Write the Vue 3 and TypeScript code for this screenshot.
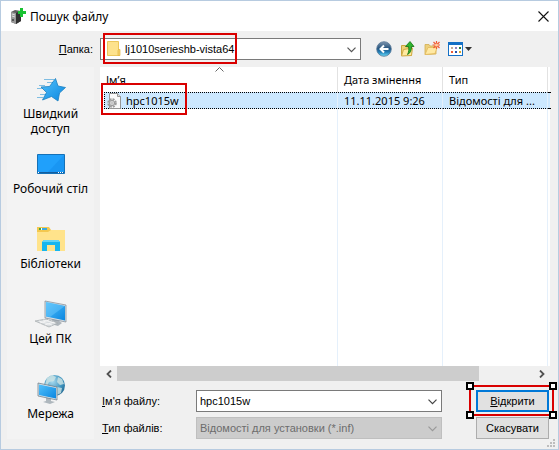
<script setup lang="ts">
import { ref } from 'vue'

interface FileRow {
  name: string
  modified: string
  type: string
}

const places = [
  { id: 'quick', label: 'Швидкий доступ' },
  { id: 'desktop', label: 'Робочий стіл' },
  { id: 'libraries', label: 'Бібліотеки' },
  { id: 'pc', label: 'Цей ПК' },
  { id: 'network', label: 'Мережа' },
]

const files: FileRow[] = [
  { name: 'hpc1015w', modified: '11.11.2015 9:26', type: 'Відомості для ...' },
]

const fileName = ref('hpc1015w')
const folder = ref('lj1010serieshb-vista64')
const fileType = ref('Відомості для установки (*.inf)')
</script>

<template>
  <main class="dialog">
    <header class="titlebar">
      <svg class="app-icon" width="16" height="16" viewBox="0 0 16 16" aria-hidden="true">
        <path d="M1 4l4-2 6 1v10l-5 3-5-2z" fill="#5d5d5d" />
        <path d="M1 4l5 1v11l-5-2z" fill="#999" />
        <path d="M6 5l5-2v10l-5 3z" fill="#303030" />
        <path d="M2 6l3 1M2 8l3 1" stroke="#ddd" />
        <path d="M2 11h2v2H2z" fill="#555" />
        <path d="M10 0h3v3h3v3h-3v3h-3V6H8V3h2z" fill="#19c232" />
      </svg>
      <h1>Пошук файлу</h1>
      <button class="close" type="button" aria-label="Закрити">
        <svg width="11" height="11" viewBox="0 0 11 11"><path d="M.5.5l10 10M10.5.5l-10 10" stroke="#111" stroke-width="1.1" /></svg>
      </button>
    </header>

    <div class="toolbar">
      <label class="folder-label" for="folder"><u>П</u>апка:</label>
      <div class="combo folder">
        <select id="folder" v-model="folder">
          <option>lj1010serieshb-vista64</option>
        </select>
        <svg class="folder-icon" width="14" height="17" viewBox="0 0 14 17" aria-hidden="true">
          <path d="M.5 1.500h11v9h1v5H.5z" fill="#fde28c" stroke="#ecc75b" />
          <path d="M11.500 9.500h1.500v6h-2v-5z" fill="#f6d36e" stroke="#e2b640" stroke-width=".7" />
        </svg>
        <svg class="chevron" width="9" height="6" viewBox="0 0 9 6"><path d="M.5.7l4 4 4-4" fill="none" stroke="#555" stroke-width="1.2" /></svg>
        <span class="mark mark-folder"></span>
      </div>
      <div class="tools">
        <button type="button" aria-label="Назад">
          <svg width="16" height="16" viewBox="0 0 16 16">
            <defs><linearGradient id="back" x1="0" y1="0" x2="0" y2="1"><stop offset="0" stop-color="#8196ae" /><stop offset=".45" stop-color="#27557f" /><stop offset=".7" stop-color="#1f7bb5" /><stop offset="1" stop-color="#6ee0fa" /></linearGradient></defs>
            <circle cx="8" cy="8" r="7.300" fill="url(#back)" stroke="#567695" stroke-width=".8" />
            <path d="M12.500 8H4.500M8 4.500L4.500 8 8 11.500" fill="none" stroke="#fff" stroke-width="2" />
          </svg>
        </button>
        <button type="button" aria-label="На рівень вище">
          <svg width="16" height="16" viewBox="0 0 16 16">
            <path d="M1.500 14.500v-10h4l1 1.500h5v8.500z" fill="#efd076" stroke="#c8a33f" />
            <path d="M1.500 15l2-6.500 9-1.500-1 7.500z" fill="#ffeaa0" stroke="#d1ab47" />
            <path d="M5.500 5.500L10 .500 14 5.500h-2.500c0 4-1 6.500-4 8 1.500-3 1.500-5 1-8z" fill="#2fb52e" stroke="#14700f" stroke-width=".8" />
          </svg>
        </button>
        <button type="button" aria-label="Створити папку">
          <svg width="16" height="16" viewBox="0 0 16 16">
            <path d="M1 13.500v-10h4l1 1.500h6v8z" fill="#ecd07d" stroke="#d3ad4f" stroke-width=".8" />
            <path d="M1 13.500l3-7h9l-2 6z" fill="#ffe9a3" stroke="#e2b95a" stroke-width=".8" />
            <path d="M12.500 0v8M8.500 4h8M9.500 1l6 6M15.500 1l-6 6" stroke="#f05a35" stroke-width="1.200" />
            <circle cx="12.500" cy="4" r="1.500" fill="#ffd0a0" />
          </svg>
        </button>
        <button type="button" class="view" aria-label="Вигляд">
          <svg width="24" height="16" viewBox="0 0 24 16">
            <path d="M0 1h15v14H0z" fill="#1470c6" /><path d="M1 4h13v10H1z" fill="#fff" />
            <path d="M3 6h2v2H3z" fill="#c2ad98" /><path d="M7 6h2v2H7z" fill="#8b83c4" /><path d="M11 6h2v2h-2z" fill="#267b3c" />
            <path d="M3 10h2v2H3z" fill="#ee5a35" /><path d="M7 10h2v2H7z" fill="#2350ab" /><path d="M11 10h2v2h-2z" fill="#d8a426" />
            <path d="M17 6h7l-3.500 4z" fill="#333" />
          </svg>
        </button>
      </div>
    </div>

    <div class="body">
      <nav class="places">
        <button v-for="p in places" :key="p.id" type="button" class="place">
          <svg width="32" height="32" viewBox="0 0 32 32" aria-hidden="true">
            <defs>
              <linearGradient id="blue" x1="0" y1="0" x2="1" y2="1"><stop offset="0" stop-color="#52c1fb" /><stop offset="1" stop-color="#0a86e0" /></linearGradient>
              <radialGradient id="globe" cx=".4" cy=".3" r=".8"><stop offset="0" stop-color="#a9dbef" /><stop offset=".6" stop-color="#3e93be" /><stop offset="1" stop-color="#1d5d86" /></radialGradient>
            </defs>
            <template v-if="p.id === 'quick'">
              <path d="M9 6.500h10M12 9.500h6M4 12.500h6M2 15.500h6M5 21.500h6M2 24.500h6" stroke="#7fbde2" />
              <path d="M20.500 5.500l2.500 7.500 7.500 1.500-6 5.500-1.500 8-6.500-4.500-9 3.500 4-7.500-5.500-5.500 8.500-.5z" fill="url(#blue)" stroke="#1b7fbf" stroke-width=".8" stroke-linejoin="round" />
            </template>
            <template v-else-if="p.id === 'desktop'">
              <path d="M2.500 6.500h27v19h-27z" fill="#20a0fb" stroke="#1571b7" />
              <path d="M29 7v16L12 25z" fill="#1690ee" opacity=".6" />
              <path d="M3 24h26v1H3z" fill="#145d9e" /><path d="M3 24h1v1H3zM23 24h1v1h-1zM25 24h1v1h-1zM27 24h1v1h-1z" fill="#fff" />
            </template>
            <template v-else-if="p.id === 'libraries'">
              <path d="M2 4h12l2 3h14v21H2z" fill="#f3c84f" />
              <path d="M4 5h8v2H4z" fill="#fff" /><path d="M4 5h2v2H4z" fill="#46a43e" /><path d="M7 5h5v2H7z" fill="#3aa9e2" />
              <path d="M2 9h11l3-2h14v21H2z" fill="#ffe38b" />
              <path d="M7 28V19l2-2h14l2 2v9h-5v-6h-8v6z" fill="#16b6ee" /><path d="M7 19l2-2h14l2 2z" fill="#63d3f5" />
            </template>
            <template v-else-if="p.id === 'pc'">
              <path d="M18 20l6 3 3 2-4 3-7-2z" fill="#aeb5bb" />
              <path d="M10 3l21 4v17l-21-4z" fill="#d8e0e6" stroke="#7c8790" stroke-width=".7" />
              <path d="M11 4l19 4v14.500L11 18.500z" fill="url(#blue)" /><path d="M11 4l19 4-15 11-4-.8z" fill="#7bd0ff" opacity=".4" />
              <path d="M0 23l11-2 12 4-9 4z" fill="#d7dbde" stroke="#a5aaae" stroke-width=".7" />
              <path d="M4 23l13 4M8 22l12 3M5 25l9-3M10 27l9-3" stroke="#f8f8f8" stroke-width=".8" />
            </template>
            <template v-else>
              <circle cx="19.500" cy="12.500" r="10.500" fill="url(#globe)" />
              <path d="M12 5l5-3 4 2-2 4-5 1-2 4-2-1zM23 4l4 2 2 5-4 1-3-3zM22 14l5 1-1 5-4 2z" fill="#cfe5e5" opacity=".8" />
              <path d="M11 24l5 1v3l4 1-5 2-7-2 3-1z" fill="#aeb7bd" />
              <path d="M3 10l19 4v13L3 23z" fill="#d8e4eb" stroke="#65747e" stroke-width=".7" />
              <path d="M4 11.500l17 3.500v10.500L4 22z" fill="url(#blue)" />
            </template>
          </svg>
          <span>{{ p.label }}</span>
        </button>
      </nav>

      <section class="content">
        <div class="list">
          <table>
            <colgroup><col /><col class="col" /><col class="col" /><col class="edge" /></colgroup>
            <thead>
              <tr>
                <th class="first" aria-sort="ascending">
                  Ім’я
                  <svg class="sort" width="9" height="5" viewBox="0 0 9 5"><path d="M.5 4.500l4-4 4 4" fill="none" stroke="#666" /></svg>
                </th>
                <th>Дата змінення</th><th>Тип</th><th class="end"></th>
              </tr>
            </thead>
            <tbody>
              <tr v-for="f in files" :key="f.name" class="selected">
                <td class="first">
                  <div class="file">
                    <svg width="15" height="16" viewBox="0 0 15 16" aria-hidden="true">
                      <path d="M2.500.5h8l3 3v12h-11z" fill="#fafafa" stroke="#969696" /><path d="M10.500.5v3h3" fill="#ddd" stroke="#969696" />
                      <circle cx="5" cy="10" r="3.800" fill="none" stroke="#9c9c9c" stroke-width="2" stroke-dasharray="2 1" />
                      <circle cx="5" cy="10" r="2.700" fill="#d8d8d8" stroke="#9b9b9b" /><circle cx="5" cy="10" r="1" fill="#fff" stroke="#8b8b8b" stroke-width=".5" />
                    </svg>
                    <span>{{ f.name }}</span>
                  </div>
                  <span class="mark mark-file"></span>
                </td>
                <td>{{ f.modified }}</td><td>{{ f.type }}</td><td class="end"></td>
              </tr>
              <tr class="rest"><td class="first"></td><td></td><td></td><td class="end"></td></tr>
            </tbody>
          </table>
        </div>
        <div class="scrollbar">
          <button type="button" aria-label="Прокрутити ліворуч"><svg width="6" height="8" viewBox="0 0 6 8"><path d="M5 .5L1.500 4 5 7.500" fill="none" stroke="#505050" stroke-width="1.800" /></svg></button>
          <div class="track"><div class="thumb"></div></div>
          <button type="button" aria-label="Прокрутити праворуч"><svg width="6" height="8" viewBox="0 0 6 8"><path d="M1 .5L4.500 4 1 7.500" fill="none" stroke="#505050" stroke-width="1.800" /></svg></button>
        </div>

        <form class="form" @submit.prevent>
          <label for="name"><u>І</u>м'я файлу:</label>
          <div class="combo">
            <input id="name" v-model="fileName" type="text" />
            <svg class="chevron" width="9" height="6" viewBox="0 0 9 6"><path d="M.5.7l4 4 4-4" fill="none" stroke="#444" stroke-width="1.200" /></svg>
          </div>
          <div class="action">
            <button class="btn primary" type="submit"><span><u>В</u>ідкрити</span></button>
            <span class="mark mark-open"><i></i><i></i><i></i><i></i></span>
          </div>
          <label for="type"><u>Т</u>ип файлів:</label>
          <div class="combo disabled">
            <select id="type" v-model="fileType" disabled>
              <option>Відомості для установки (*.inf)</option>
            </select>
            <svg class="chevron" width="9" height="6" viewBox="0 0 9 6"><path d="M.5.7l4 4 4-4" fill="none" stroke="#999" stroke-width="1.200" /></svg>
          </div>
          <div class="action"><button class="btn" type="button">Скасувати</button></div>
        </form>
      </section>
    </div>
    <svg class="grip" width="8" height="8" viewBox="0 0 8 8" aria-hidden="true"><path d="M6 0h2v2H6zM3 3h2v2H3zM6 3h2v2H6zM0 6h2v2H0zM3 6h2v2H3zM6 6h2v2H6z" fill="#bdbdbd" /></svg>
  </main>
</template>

<style>
body {
  margin: 0;
}
</style>

<style scoped>
* {
  box-sizing: border-box;
}

.dialog {
  position: relative;
  display: flex;
  flex-direction: column;
  min-height: 100vh;
  border: 1px solid #b7cbe0;
  background: #f0f0f0;
  color: #000;
  font: 12px/15px "Noto Sans", "Open Sans", sans-serif;
}

button {
  padding: 0;
  border: 0;
  background: none;
  color: inherit;
  font: inherit;
}

svg {
  display: block;
  flex: none;
}

.titlebar {
  display: flex;
  align-items: center;
  height: 30px;
  padding: 0 9px;
  background: #fff;
}

h1 {
  flex: 1;
  margin: 0 0 0 4px;
  font-size: 12px;
  font-weight: 400;
}

.toolbar {
  display: flex;
  align-items: center;
  height: 36px;
  padding-right: 8px;
}

.toolbar,
.form {
  font-family: "Liberation Sans", Arial, sans-serif;
  font-size: 11px;
}

.folder-label {
  width: 99px;
  padding-right: 7px;
  text-align: right;
}

.combo {
  position: relative;
  min-width: 0;
}

.folder {
  flex: 1;
}

.combo select,
.combo input {
  display: block;
  width: 100%;
  height: 22px;
  margin: 0;
  padding: 0 24px 0 3px;
  border: 1px solid #7a7a7a;
  border-radius: 0;
  outline: 0;
  appearance: none;
  background: #fff;
  color: #000;
  font: inherit;
}

.combo.folder select {
  padding-left: 24px;
}

.combo.disabled select {
  border-color: #bfbfbf;
  background: #ccc;
  color: #6d6d6d;
  opacity: 1;
}

.chevron {
  position: absolute;
  top: 9px;
  right: 5px;
  pointer-events: none;
}

.folder-icon {
  position: absolute;
  top: 2px;
  left: 7px;
}

.mark {
  position: absolute;
  border: 2px solid #d90000;
  pointer-events: none;
}

.mark-folder {
  top: -5px;
  left: 3px;
  width: 134px;
  height: 31px;
}

.mark-file {
  z-index: 1;
  top: -9px;
  left: 1px;
  width: 86px;
  height: 32px;
}

.mark-open {
  inset: -5px -5px -4px -7px;
}

.mark-open i {
  position: absolute;
  width: 8px;
  height: 8px;
  border: 2px solid #000;
  background: #fff;
}

.mark-open i:nth-child(odd) {
  left: -5px;
}

.mark-open i:nth-child(even) {
  right: -5px;
}

.mark-open i:nth-child(-n + 2) {
  top: -5px;
}

.mark-open i:nth-child(n + 3) {
  bottom: -5px;
}

.tools {
  display: flex;
  gap: 8px;
  width: 189px;
  padding-left: 15px;
}

.body {
  display: flex;
  flex: 1;
  gap: 6px;
  padding: 0 8px 10px 6px;
}

.places {
  display: flex;
  flex-direction: column;
  width: 87px;
  padding-top: 6px;
  background: #f3f3f3;
}

.place {
  display: flex;
  flex-direction: column;
  align-items: center;
  gap: 1px;
  height: 75px;
}

.place:last-child {
  height: 64px;
}

.content {
  display: flex;
  flex: 1;
  flex-direction: column;
  min-width: 0;
}

.list {
  display: grid;
  flex: 1;
  background: #fff;
}

table {
  width: 100%;
  height: 100%;
  border-collapse: separate;
  border-spacing: 0;
  font-size: 11px;
  table-layout: fixed;
}

.col {
  width: 105px;
}

.edge {
  width: 2px;
}

th,
td {
  padding: 0 0 0 6px;
  border-right: 1px solid #e5f0fb;
  text-align: left;
  font-weight: 400;
  white-space: nowrap;
}

th {
  height: 25px;
  border-color: #e2e2e2;
}

.first {
  position: relative;
}

.end {
  padding: 0;
  border-right: 0;
}

.sort {
  position: absolute;
  top: 0;
  left: calc(50% - 4px);
}

.selected td {
  height: 17px;
  border-top: 1px dotted #000;
  border-bottom: 1px dotted #000;
  background: #cce8ff;
  line-height: 15px;
}

.selected td.first {
  padding-left: 4px;
  border-top: 0;
  border-bottom: 0;
  background: none;
}

.file {
  display: flex;
  align-items: center;
  gap: 4px;
  height: 17px;
  padding-left: 2px;
  border: 1px dotted #000;
  border-right: 0;
  background: #cce8ff;
}

.scrollbar {
  display: flex;
  height: 15px;
}

.scrollbar button {
  display: grid;
  place-items: center;
  width: 17px;
}

.track {
  flex: 1;
}

.thumb {
  width: 87%;
  height: 100%;
  background: #cdcdcd;
}

.form {
  display: grid;
  grid-template-columns: 94px minmax(0, 1fr) 74px;
  row-gap: 5px;
  align-items: center;
  margin-top: 9px;
  padding-left: 2px;
}

.action {
  position: relative;
  margin-right: 1px;
}

.form .combo {
  margin-right: 34px;
}

.btn {
  display: block;
  width: 100%;
  height: 22px;
  border: 1px solid #adadad;
  background: #e1e1e1;
}

.primary {
  border: 2px solid #0078d7;
}

.grip {
  position: absolute;
  right: 3px;
  bottom: 2px;
}
</style>
